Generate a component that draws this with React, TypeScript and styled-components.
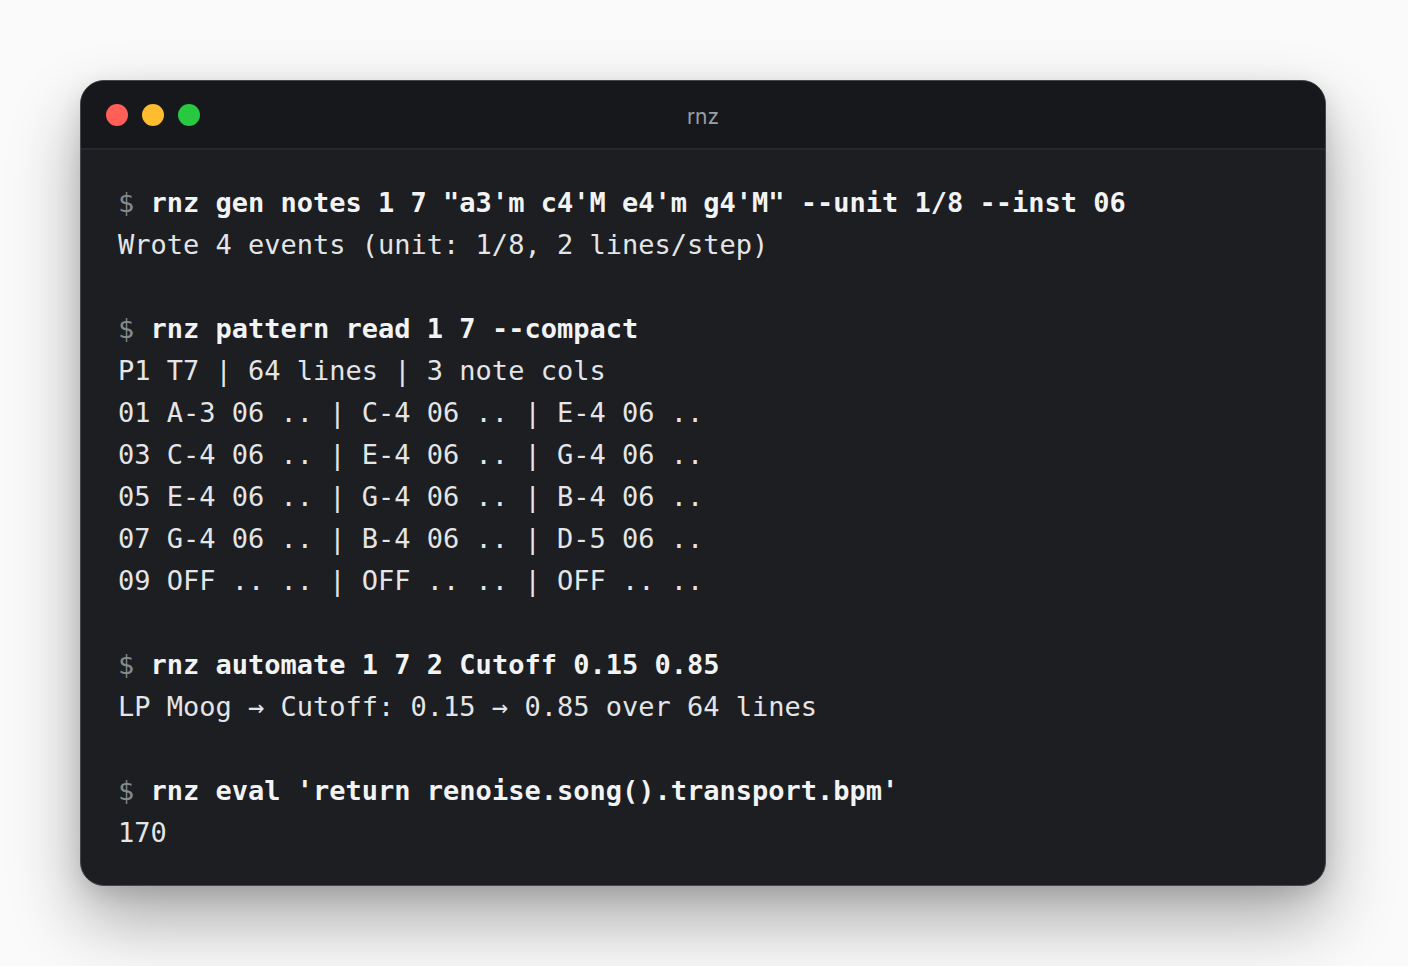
import React from "react";
import styled, { createGlobalStyle } from "styled-components";

const Global = createGlobalStyle`
  html, body { margin: 0; padding: 0; background: #fafafa; }
  body { font-family: "DejaVu Sans Mono", monospace; }
`;

const Page = styled.div`
  padding: 80px 82px 80px 80px;
  min-height: 966px;
  box-sizing: border-box;
`;

const Window = styled.div`
  height: 806px;
  box-sizing: border-box;
  background: #1c1e22;
  border: 1px solid #44474c;
  border-radius: 24px;
  overflow: hidden;
  display: flex;
  flex-direction: column;
  box-shadow: 0 34px 70px rgba(0, 0, 0, 0.32), 0 8px 24px rgba(0, 0, 0, 0.12);
`;

const TitleBar = styled.div`
  position: relative;
  height: 67px;
  flex: none;
  background: #16181c;
  border-bottom: 2px solid #25282c;
  display: flex;
  align-items: center;
  padding-left: 25px;
  gap: 14px;
`;

const Light = styled.span<{ $c: string }>`
  width: 22px;
  height: 22px;
  border-radius: 50%;
  background: ${(p) => p.$c};
`;

const Title = styled.div`
  position: absolute;
  left: 0;
  right: 0;
  top: 3px;
  bottom: 0;
  display: flex;
  align-items: center;
  justify-content: center;
  font-family: "Inter", "Noto Sans", sans-serif;
  font-size: 21px;
  color: #9b9ea3;
  pointer-events: none;
`;

const Body = styled.div`
  padding: 32px 37px 0 37px;
  font-family: "DejaVu Sans Mono", monospace;
  font-size: 27px;
  line-height: 42px;
  color: #e4e5e7;
  white-space: pre;
`;

const Line = styled.div``;

const Blank = styled.div`
  height: 42px;
`;

const Prompt = styled.span`
  color: #85888d;
`;

const Cmd = styled.span`
  color: #f2f3f4;
  font-weight: bold;
`;

const blocks: { cmd: string; out: string[] }[] = [
  {
    cmd: `rnz gen notes 1 7 "a3'm c4'M e4'm g4'M" --unit 1/8 --inst 06`,
    out: ["Wrote 4 events (unit: 1/8, 2 lines/step)"],
  },
  {
    cmd: "rnz pattern read 1 7 --compact",
    out: [
      "P1 T7 | 64 lines | 3 note cols",
      "01 A-3 06 .. | C-4 06 .. | E-4 06 ..",
      "03 C-4 06 .. | E-4 06 .. | G-4 06 ..",
      "05 E-4 06 .. | G-4 06 .. | B-4 06 ..",
      "07 G-4 06 .. | B-4 06 .. | D-5 06 ..",
      "09 OFF .. .. | OFF .. .. | OFF .. ..",
    ],
  },
  {
    cmd: "rnz automate 1 7 2 Cutoff 0.15 0.85",
    out: ["LP Moog \u2192 Cutoff: 0.15 \u2192 0.85 over 64 lines"],
  },
  {
    cmd: "rnz eval 'return renoise.song().transport.bpm'",
    out: ["170"],
  },
];

export default function App() {
  return (
    <>
      <Global />
      <Page>
        <Window>
          <TitleBar>
            <Light $c="#ff5f57" />
            <Light $c="#febc2e" />
            <Light $c="#28c840" />
            <Title>rnz</Title>
          </TitleBar>
          <Body>
            {blocks.map((b, i) => (
              <React.Fragment key={i}>
                {i > 0 && <Blank />}
                <Line>
                  <Prompt>$ </Prompt>
                  <Cmd>{b.cmd}</Cmd>
                </Line>
                {b.out.map((o, j) => (
                  <Line key={j}>{o}</Line>
                ))}
              </React.Fragment>
            ))}
          </Body>
        </Window>
      </Page>
    </>
  );
}
